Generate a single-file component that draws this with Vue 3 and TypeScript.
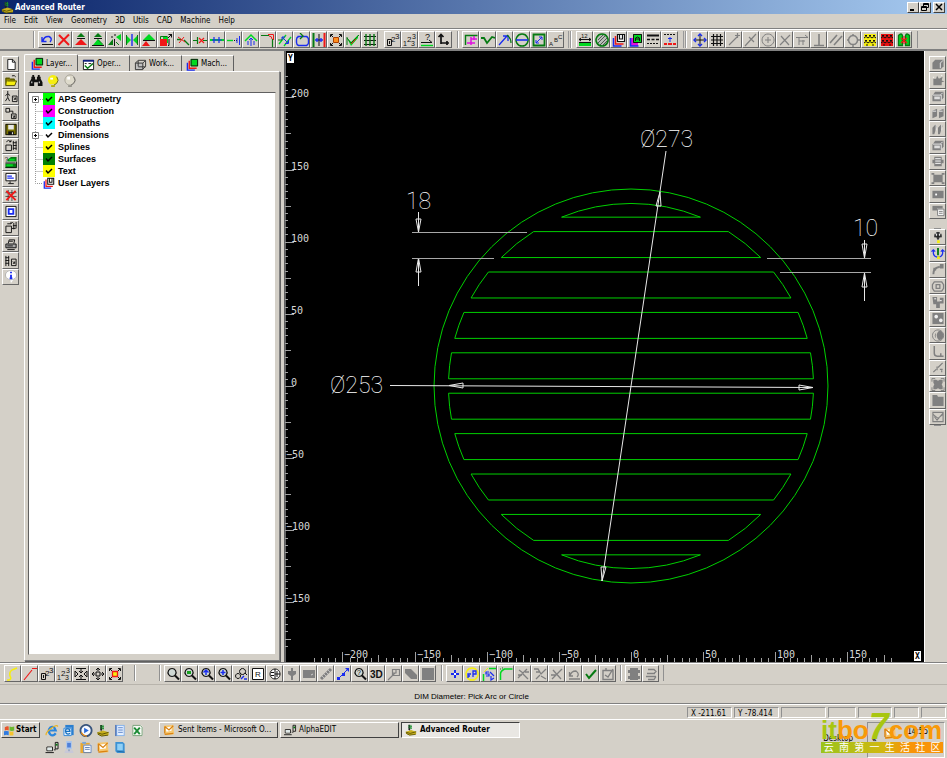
<script setup lang="ts">
import { h } from 'vue'

type Part = { k: 'f' | 's' | 't'; c: string; d: string; w?: number; x?: number; y?: number; z?: number }
const f = (c: string, d: string): Part => ({ k: 'f', c, d })
const s = (c: string, d: string, w = 1): Part => ({ k: 's', c, d, w })
const t = (c: string, x: number, y: number, z: number, d: string): Part => ({ k: 't', c, d, x, y, z })

const K = '#111'
const G = '#00d820'
const D = '#067a12'
const B = '#1a2cf0'
const R = '#f01818'
const Y = '#f6ee10'
const N = '#808080'
const W = '#fff'
const M = '#e010e0'

const numbers = [s(K, 'M1.5 6.5h4v6h-4zM3.5 8v3'), t(K, 5, 9, 8, '2'), t(K, 9, 6, 8, '3')]
const numbersDiag = [t(K, 0, 13, 7, '1'), t(K, 4, 9, 8, '2'), t(K, 9, 6, 7, '3'), t(K, 8, 13, 7, '3')]
const corners = s(K, 'M1.5 4V1.5H4M10 1.5h2.5V4M12.5 10v2.5H10M4 12.5H1.5V10M2 2l2 2M12 2l-2 2M2 12l2-2M12 12l-2-2')
const lens = [f('#cfd8d4', 'M6 1.5a4 4 0 1 0 .1 0z'), s(K, 'M6 1.5a4 4 0 1 0 .1 0z', 1.2), s(K, 'M9 8.5l4 4', 2)]
const layersU = [s(B, 'M1.5 5v8h8', 1.5), s(R, 'M3.5 3v8h8', 1.5), f(W, 'M5 1h8v8H5z'), s(K, 'M5.5 1.5h7v7h-7zM7.5 2v4h3V2', 1.2)]
const layersG = [s(B, 'M1.5 5v8h8', 1.5), s(R, 'M3.5 3v8h8', 1.5), f(G, 'M5 1h8v8H5z'), s(K, 'M5.5 1.5h7v7h-7z')]
const brick = (c: string) => [
  f(c, 'M1 1h12v12H1z'),
  s(K, 'M2 2.5h2M6 2.5h2M10 2.5h2M1 5l2-1.5 2 1.500 2-1.500 2 1.500 2-1.500 2 1.500M2 7.5h2M6 7.5h2M10 7.5h2M1 10l2-1.500 2 1.500 2-1.500 2 1.500 2-1.500 2 1.500M3 12h2M9 12h2'),
]
const boxG = [f(N, 'M1 5l3-3h9v7l-3 3H1z'), s('#e8e8e8', 'M9.5 11V5.5l3-3')]
const edit = [f('#c8b020', 'M1 9l6-2 6 2v3l-8 1-4-2z'), s('#5a5200', 'M1 9.5l5 1.5 7-2M1.5 11l4 2 7-1'), f('#222', 'M4 1h2v5l-1 2-1-2z'), s('#18902c', 'M7 1v5M4 2l4 1M4 4l4 1')]
const pcs = [s(K, 'M1.5 6.5h6v4h-6z'), s(K, 'M0 12.5h9M9 9.5h2M10.5 1.5h3v7h-3z'), f('#dfe8e8', 'M2 7h5v3H2z'), s(D, 'M12 3v2', 2)]
const mail = [f('#f6c66e', 'M1 2l11-1 1 11-10 1z'), f(W, 'M3 4l7-1v5l-6 1z'), s('#d98210', 'M2 3l5 4 5-5M2 12l10-1M2 3v8', 1.4)]

const icons: Record<string, Part[]> = {
  undo: [s(B, 'M2 4v4.5h4.500M3 8q1-5 6-4.5 4 2 1 5.500', 1.4), s(K, 'M2 11.5h11')],
  delete: [s(R, 'M2 2l10 10M12 1.5L1.5 12', 2)],
  raise: [f(D, 'M7 0l4 4H3z'), s(K, 'M3 5.5h8'), f(R, 'M7 6l6 6H1z')],
  lift: [f(D, 'M7 0l4 4H3z'), s(K, 'M3 5.5h8M1 12.5h12'), f(G, 'M7 6l5 6H2z'), s(D, 'M7 6.5l5 5')],
  rotate: [f(D, 'M0 12l5-6v6z'), f(G, 'M8 4l5-3v7z'), s(K, 'M3 4h2M6 2h2M6.5 6v7'), s(D, 'M8 9l3 3')],
  mirror: [f(G, 'M1 2l5 5-5 5z'), f(G, 'M13 2L8 7l5 5z'), s(B, 'M7 1v12', 1.4), s(D, 'M1.5 2v10M12.5 2v10')],
  slope: [f(G, 'M7 1l6 6H1z'), s(K, 'M1 7.5h12'), f(R, 'M4 8l4 5H0z')],
  scale: [s(D, 'M1.5 6V3.5h7'), f(G, 'M4 4h5v6H4z'), f(R, 'M1 6h7v7H1z'), s(K, 'M9 5l4-4M9.5 1.5h3v3M9 12.5h1V6')],
  trimA: [s(D, 'M1 6.5h4M8 7l5 5', 1.4), s(R, 'M2 4l7 5M8 4l-5 6')],
  trimB: [s(D, 'M0 7.5h4M4.5 4v7M10 7.5h4', 1.2), s(R, 'M6 5l5 5M11 5l-5 5', 1.2)],
  join: [s(G, 'M0 7h14', 2), s(B, 'M4 4v6M9 4v6M2 7h10', 1.2)],
  extend: [s(G, 'M0 7.5h6', 1.4), s(K, 'M7 7.5h1M9 7.5h1'), s(B, 'M12.5 3v9M10 5v5')],
  peak: [s(G, 'M1 8l6-6 6 6', 1.5), s(B, 'M4 8v4M7 5v8M10 8v4M5 7l2-2 2 2')],
  fillet: [s(D, 'M0 2.5h8M11.5 6v8', 1.2), s(R, 'M7 1.5h5.5V7M8 3q3 0 3 3')],
  offset: [s(G, 'M1 11L8 2M6 13l7-9', 1.3), s(B, 'M4 4l6 6M4 7V4h3M7 10.5h3.5V7'), s(D, 'M0 7h4')],
  contour: [s(B, 'M2.5 3.5h9q2 1 2 3v3q0 2-2 3h-8q-2-1-2-3v-3q0-2 2-3', 1.4), s(D, 'M5 6l3-3-3-3', 1.3)],
  gap: [s(D, 'M1.5 0v14', 2), s(R, 'M12.5 0v14', 2), s(B, 'M3 7h8M5 5v4M9 5v4', 1.3), s(K, 'M7 1v12')],
  explode: [corners, f('#ff9020', 'M5 5h4v4H5z'), s('#b04000', 'M4.5 4.5h5v5h-5z')],
  check: [f(G, 'M1 5l4 4 7-7v3l-7 8z'), s(R, 'M5 11l5-5'), s(D, 'M1 4v8M1 5l4 5 8-8')],
  grid3: [s(K, 'M1 3.5h12M1 7.5h12M1 11.5h12'), s(D, 'M3 1v12M7 1v12M11 1v12', 1.4)],
  num: numbers,
  numDiag: numbersDiag,
  query: [t(K, 5, 7, 9, '?'), s(G, 'M1 12.5h12', 1.4), s(K, 'M1 9.5h11M9 7l3 2.5')],
  axes: [s(K, 'M4 2v9M1.5 4L4 1.5 6.500 4M4 10h8M10 8v4', 1.7)],
  rectPath: [s(D, 'M1.5 12V2.5h12', 1.4), s(M, 'M3 10h8M7 6h6M7 4v8M10 3v4', 1.5)],
  wave: [s(D, 'M0 5l3 0 3 5 5-6 3 1', 1.8)],
  arc: [s(B, 'M1 12l8-9M5 3h5v5', 1.3), s(D, 'M9 2q4 3 4 8', 1.2)],
  circle: [s(D, 'M7 1a6 6 0 1 0 .1 0z', 1.5), s(B, 'M1 7h12', 1.6)],
  square: [s(D, 'M1.5 1.5h11v11h-11z', 1.8), s(B, 'M4 10l6-6M4 7v3h3M7 4h3v3')],
  abc: [t(K, 0, 13, 6, 'A'), t(K, 5, 9, 6, 'B'), t(K, 9, 6, 6, 'C')],
  measure: [f(G, 'M1 9h12v4H1z'), s(K, 'M1 6.5h12M3 5L1 6.500 3 8M11 5l2 1.500L11 8M1 9.5h12'), t(K, 3, 5, 6, '12')],
  hatch: [f('#b8c0b8', 'M7 1a6 6 0 1 0 .1 0z'), s('#555', 'M3 7l5-5M3 10l7-7M5 12l7-7M8 12l4-4'), s(D, 'M7 1a6 6 0 1 0 .1 0z', 1.6)],
  layersU,
  lock: [f(M, 'M1 5h8v8H1z'), s(B, 'M1.5 5v8h8', 1.6), f(G, 'M4 1h9v9H4z'), s(K, 'M4.5 1.5h8v8h-8zM6.500 8V5q2-2 4 0v3M7 6h3')],
  lines: [s(K, 'M1 2.5h12', 2), s(K, 'M1 6.5h3M5.5 6.5h3M10 6.5h3', 1.6), s(K, 'M1 10.5h2M4 10.5h2M7 10.5h2M10 10.5h2')],
  linesRed: [s(K, 'M1 1.5h2M4 1.5h2M7 1.5h2M10 1.5h2'), s(B, 'M7 4v5M5 5.5h4'), s(R, 'M1 11h3M5 11h4M10 11h3', 2)],
  move: [s(K, 'M7 1v12M1 7h12'), s(B, 'M5 3l2-2 2 2M5 11l2 2 2-2M3 5L1 7l2 2M11 5l2 2-2 2', 1.4)],
  mesh: [s(K, 'M1 3.5h12M1 7h12M1 10.5h12M3.5 1v12M7 1v12M10.5 1v12', 1.2)],
  gEnd: [s(N, 'M2 12L11 3M8 2.5h5M10.5 0v5', 1.2)],
  gMid: [s(N, 'M1 13L12 1M5 4l5 5', 1.2)],
  gCentre: [s(N, 'M7 1a6 6 0 1 0 .1 0zM7 4v6M4 7h6')],
  gCross: [s(N, 'M2 12L12 2M3 3l8 9', 1.2)],
  gTan: [s(N, 'M1 4.5h12M10 2l3 2.5M4 5v7M8 7v5M4 8h6')],
  gPerp: [s(N, 'M7 1v11M2 12.5h10', 1.6)],
  gPar: [s(N, 'M1 10l7-8M5 12l8-9', 1.6)],
  gRing: [s(N, 'M7 2.5a4.5 4.5 0 1 0 .1 0zM7 1v2M7 11v3M1 7h2M11 7h3', 1.5)],
  brickY: brick(Y),
  brickR: brick('#e81010'),
  book: [f(G, 'M1 2l4-1v11H1zM13 2L9 1v11h4z'), s(D, 'M1.5 2.5q3-3 4 0v10h-4zM12.5 2.5q-3-3-4 0v10h4z', 1.3), s(R, 'M4 5l6 5M10 5l-6 5M7 3v8', 1.2)],
  page: [f(W, 'M3 1h6l3 3v9H3z'), s(K, 'M3.5 1.5H9l2.500 3v8h-8zM8.5 1.5v3h3')],
  open: [f('#8c8400', 'M1 4h4l1 1h5v7H1z'), f(Y, 'M3 7h10l-2 5H1z'), s('#4a4600', 'M1.5 12V4.5h4l1 1h4V7M3 7.5h10l-2 5H1'), s(K, 'M8 2q3-1 4 1')],
  person: [s(K, 'M3.5 1v3M1 6l2.5-2L6 6M3.5 4v4L1 12M3.5 8l2 4M8.500 6.5h5v6h-5zM10 8l2 2M12 8v2h-2')],
  nodes: [s(K, 'M1.5 1.5h4v4h-4zM7.5 7.5h5v5h-5zM6 4.5h3V7M9 9l2 2M11 9v2H9')],
  save: [f('#787000', 'M1 1h12v12H1z'), s(K, 'M1.5 1.5h11v11h-11z'), f('#e8e8e8', 'M4 2h6v5H4z'), f(K, 'M4 9h6v4H4z'), f(W, 'M8 10h1v2H8z')],
  boxIn: [s(K, 'M1.5 6.5h6v6h-6zM2 3q2-3 5 0M7 1v2H5M9.5 2v10M12.5 2v10M9 4h4M9 7h4M9 10h4')],
  greenStack: [t(K, 0, 6, 7, '?'), f(D, 'M3 4l4-3h6v5H3zM1 8h12v5H1z'), f(G, 'M5 3h6v2H5zM2 9h7v2H2z'), s(K, 'M1 7.5h11M1 12.5h12V6')],
  screen: [f(W, 'M2 2h10v7H2z'), s(K, 'M1.5 1.5h11v8h-11zM4 12.5h6M6 10v2'), s(B, 'M3 4.5h5M3 6.5h7', 1.3)],
  fault: [s(K, 'M1 4h12M1 8h12M4 1v12M8 1v12', 0.7), s(R, 'M2 2l10 10M12 2L2 12', 2)],
  chip: [f(W, 'M2 2h10v10H2z'), s(K, 'M1.5 1.5h11v11h-11z'), s(B, 'M4.5 4.5h5v5h-5z', 2)],
  boxOut: [s(K, 'M1.5 5.5h6v7h-6zM3 3h4V1M7 3l2-2M10 2v7M12.5 1v7M9 5h4M8 8h4')],
  printer: [f('#aaa', 'M1 6h12v5H1z'), s(K, 'M1.5 6.5h11v4h-11zM4 6l1-4h6l-1 4M3 12.5h8M5 3.5h4M3 8.5h6')],
  report: [s(K, 'M1.5 2v11M4.5 2v11M1 4h4M1 7h4M1 10h4M7.5 5.5h5v7h-5zM9 8l2 2M11 8v2H9')],
  info: [f(W, 'M7 0a6 5.5 0 1 0 .1 0zM6 10l1 4 3-4z'), s('#777', 'M7 .5a6 5 0 1 0 .1 0z', 0.5), s(B, 'M7 2v1.5M7 5v4M5.5 9h3', 2)],
  solid: boxG,
  star: [f(N, 'M2 5l3 0 1-3 2 3 4-2-1 4 3 1-3 1v3H2z'), s(W, 'M11 1v1M2 3v1')],
  boxO: [f(N, 'M1 6l3-4h9v6l-3 4H1z'), f('#ddd', 'M3 7h6v3H3z'), s('#eee', 'M1.5 5.5h9v6M10 5l2-2')],
  pair: [f(N, 'M1 4l5-2v8l-5 2zM8 4l5-2v8l-5 2z'), s('#eee', 'M1 4.5h4M8 4.5h4')],
  blades: [f(N, 'M1 5l3-3 2 1-3 9H1zM7 5l3-3 2 1-3 9H7z'), s('#eee', 'M5 2v6M11 2v6')],
  spool: [f(N, 'M3 2h8v3h2v4h-2v3H3V9H1V5h2z'), s(W, 'M4 4h6M4 6.5h6M4 9h6')],
  plate: [f(N, 'M2 3h10v8H2zM0 1h3v2H0zM11 1h3v2h-3zM0 11h3v2H0zM11 11h3v2h-3z')],
  dotPlate: [f(N, 'M1 3h12v8H1z'), f(W, 'M4 6h2v2H4z')],
  sheets: [f(N, 'M1 2h11v5H1z'), f('#f4f4f4', 'M6 5h7v8H6z'), s(N, 'M6.5 5.5h7v7h-7zM8 8h4M8 10h4')],
  drill: [f('#555', 'M5 1h4v2h2v4H9l-2 3-2-3H3V3h2z'), s(K, 'M3 5.5h8M7 1v8'), f(W, 'M5 3h1v2H5zM8 3h1v2H8z'), f(Y, 'M6 10h3v3H6z')],
  probe: [s(D, 'M7 1v8', 2), s(B, 'M2 3v4q1 4 5 4t5-4V3M0 5l2-2 2 2M10 5l2-2 2 2', 1.3), f(Y, 'M6 10h3v3H6z')],
  arm: [s(N, 'M2 12q0-7 7-8', 2), f(N, 'M9 1h4v5H9zM2 5h3v3H2z')],
  rings: [s(N, 'M3 2h8l2 3v4l-2 3H3L1 9V5zM5 5h4v4H5z', 1.4)],
  clamp: [f(N, 'M1 1h5v5h3V2h4v6H9v5H5V9H2z'), s(W, 'M3 3h2M9 5h2')],
  blobs: [f(N, 'M1 1h12v12H1z'), f('#eee', 'M5 3a2 2 0 1 0 .1 0zM10 7a2 2 0 1 0 .1 0z')],
  half: [s(N, 'M7 1a6 6 0 1 0 .1 0z'), f(N, 'M8 2q-5 5 0 10a5 5 0 0 0 0-10z'), f(N, 'M5 4q-3 3 0 6-1-3 0-6z')],
  sweep: [s(N, 'M3 1v8q0 3 3 3h7M10 9v3', 1.6)],
  spray: [s(N, 'M2 12l3-3M7 7l5-5M6 6v4M11 10v2M9 9h3', 1.3)],
  expand: [f(N, 'M2 2h3l2 1 2-1h3v3l-1 2 1 2v3H9l-2-1-2 1H2V9l1-2-1-2z'), s(N, 'M.5 4V.5H4M10 .5h3.5V4M13.5 10v3.5H10M4 13.5H.5V10')],
  folder: [f(N, 'M1 1h5l1 2h6v10H1z')],
  env: [s(N, 'M1.5 2.5h11v10h-11zM2 5l5 4 5-4M3 7l3 4 6-7', 1.2)],
  curve: [s(Y, 'M1 13h2q3-1 1-4-1-4 2-6l5-2', 1.5)],
  line: [s(R, 'M1 13L9 3', 1.2), s(R, 'M9 1.5h5')],
  dims: [s(K, 'M2 1.5h10M2 12.5h10M7 2v3M5 4l2 2 2-2M7 12V9M5 10l2-2 2 2M1 4v6l3-3zM13 4v6l-3-3z')],
  pan: [s(K, 'M7 1v3M7 10v3M1 7h3M10 7h3M5 3l2-2 2 2M5 11l2 2 2-2M3 5L1 7l2 2M11 5l2 2-2 2M5 5h4v4H5z')],
  fit: [corners, f(Y, 'M5 5h4v4H5z'), s(R, 'M4.5 4.5h5v5h-5z', 1.3)],
  zoom: lens,
  zoomG: [...lens, f('#18a020', 'M4 4h4v3H4z')],
  zoomUp: [...lens, s(B, 'M6 3v5M3.5 5.5L6 3l2.500 2.500', 1.5)],
  zoomDn: [...lens, s(B, 'M6 3v5M3.5 5.5h5', 1.5)],
  find: [s(K, 'M8.5 1.5a3 3 0 1 0 .1 0zM4 6.5a2.5 2.5 0 1 0 .1 0zM11 6l2 2'), s(B, 'M7 12l3-3M10 12h3', 1.4)],
  r: [f(W, 'M1 2h12v10H1z'), s(K, 'M1.5 1.5h11v11h-11z'), t(K, 4, 10, 8, 'R')],
  globe: [f(W, 'M7 2a5 5 0 1 0 .1 0z'), s(K, 'M7 2a5 5 0 1 0 .1 0zM7 2v10M3 5.5h3M3 8.5h3M7 7h5M9 4v6')],
  tool: [f(N, 'M6 1h2v3h3v3L8 9v4H6V9L3 7V4h3z')],
  plateG: [f(N, 'M1 3h12v8H1z'), s('#ccc', 'M9 8l2-1')],
  screw: [s(N, 'M2 12L12 2', 3), s('#ddd', 'M3 9l2 2M5 7l2 2M7 5l2 2M9 3l2 2', 0.7)],
  dots: [s(B, 'M1 13L13 1'), f(B, 'M1 10h3v3H1zM6 6h3v3H6zM9 1h4v4z')],
  zoomQ: [...lens, t(K, 4, 8, 7, '?')],
  threeD: [t(K, 0, 11, 10, '3D')],
  diagG: [s(N, 'M1 13l7-7M5.5 2.5h7v6h-7zM9 2v4H6', 1.2)],
  slab: [f(N, 'M1 2h6l6 6v4H7L1 6z')],
  block: [f(N, 'M1 1h12v12H1z')],
  point: [s(B, 'M7 3v8M3 7h8', 2), f(W, 'M6 6h2v2H6z')],
  ref: [s(Y, 'M7 1a6 6 0 1 0 .1 0z', 1.5), s(B, 'M3 11V7h3M3 9h2M8 10V4h3v3H8', 1.3)],
  snap: [s(G, 'M7 1.5h7M1.5 7v7', 1.5), s(Y, 'M2 5l4-4'), s(B, 'M7 5H4v2h3v2H4M9 9v4l3-2M8 5l4 4', 1.2)],
  path: [s(G, 'M1.5 13V7q0-3 4-5h8', 1.5), s(D, 'M1 2h1M3 1h1', 1.2)],
  cutA: [s(N, 'M2 11L11 2M3 3l4 3M7 7l5 5M9 5h4M2 8h4', 1.3)],
  cutB: [s(N, 'M1 2h4l3 5 5-5M3 12l4-4M8 9l5 3M3 5h4', 1.3)],
  cutC: [s(N, 'M2 12L12 2M3 3l8 9M1 8h5', 1.3)],
  undoG: [s(N, 'M2.5 5v4H6M3 9q1-5 6-5 4 3 1 6M2 12h11', 1.3)],
  ok: [s(D, 'M2 7l3 4 7-8', 2)],
  okG: [s(N, 'M2 3.5h10v9H2zM4 8l3 2 5-8M5 1v3', 1.4)],
  stackA: [f(N, 'M3 1h8v12H3zM1 3h12v3H1zM1 9h12v3H1z')],
  stackB: [s(N, 'M4 2.5h6l2 2-2 2H4M3 6.5h8M2 9.5h10M4 12.5h6l2-3', 1.3)],
  layersG,
  oper: [f(W, 'M1 2h12v10H1z'), s(K, 'M1.5 2.5h11v10h-11z'), f('#102080', 'M1 2h12v2H1z'), s(D, 'M3 8l3 3 6-5', 1.5), s(K, 'M3 6h2M7 6h3')],
  work: [f('#c0c0c0', 'M2 5h8v7H2z'), s('#333', 'M1.5 5.5h8v7h-8zM1.5 5.5l3-3h8l-3 3M12.5 3v6l-3 3M4.5 3v6M4.5 9.5h8')],
  binoc: [f(K, 'M2 3h4v3h2V3h4v2l2 4v4H9V9H5v4H0V9l2-4zM3 1h2v2H3zM9 1h2v2H9z'), f(W, 'M2 8h1v2H2zM10 8h1v2h-1z')],
  bulbOn: [f(Y, 'M7 1a5.5 5.5 0 1 0 .1 0zM5 11h4v3H5z'), s('#6a6a20', 'M11 3q3 4 0 7l-3 2M5 13h4'), f(W, 'M4 4h3v2H4z')],
  bulbOff: [f('#dedacb', 'M7 1a5.5 5.5 0 1 0 .1 0zM5 11h4v3H5z'), s('#555', 'M11 3q3 4 0 7l-3 2M5 13h4'), s('#99948a', 'M7 1a5.5 5.5 0 1 0 .1 0z', 0.8), f(W, 'M4 3h3v3H4z')],
  ie: [s('#2b86dd', 'M11 10q-3 4-6 1-3-4 0-7 4-3 6 3H4', 2.4), s('#e9b423', 'M1 12q-2-2 6-8 6-4 6-1', 1.3)],
  outlookE: [f('#2a7fd0', 'M3 1h9v11H3z'), f('#e9f5ff', 'M1 4h9v9H1z'), s('#1670c0', 'M8 10q-2 2-4 0-2-4 1-5 3 0 3 3H3', 1.4), s('#2a7fd0', 'M1.5 4.5h8v8h-8z')],
  media: [f('#38547c', 'M7 0a7 7 0 1 0 .1 0z'), f('#f5f8ff', 'M7 2a5 5 0 1 0 .1 0z'), f('#2668da', 'M5 4l5 3-5 3z'), s('#f0901a', 'M2 9q2 4 6 4', 1.3)],
  edit,
  notes: [f('#82b0ea', 'M2 1h10v12H2z'), f('#e4efff', 'M4 2h7v10H4z'), s('#5a82c8', 'M5 4h5M5 6.5h5M5 9h5'), s('#3d5ca0', 'M2.5 1v12')],
  excel: [f('#f6faf4', 'M2 1h9l2 2v10H2z'), s('#729c74', 'M2.5 1.5h8l2 2v9h-10z'), s('#1b8a34', 'M4 4l6 7M10 4l-6 7', 2)],
  pcs,
  phone: [f('#a9c6ee', 'M4 0h6v9H4z'), f('#4f80d8', 'M5 2h4v5H5z'), f('#c8c8d8', 'M3 10h8l1 3H2z'), s('#6688bb', 'M7 9v2')],
  files: [f('#e8a832', 'M1 2h10v11H1z'), f('#f9fbff', 'M4 4h9v8H4z'), s('#6080b0', 'M4.5 4.5h8v8h-8zM6 7h5M6 9h5'), f('#76a7e0', 'M3 1h4v2H3z')],
  mail,
  book2: [f('#3c92d4', 'M2 1h8l2 2v10H4l-2-2z'), f('#8fd0f6', 'M4 3h6v7H4z'), s('#1d66a0', 'M4 11l8 1')],
  flag: [f('#e8552a', 'M1 3q3-2 5-1v5q-2-1-5 0z'), f('#6bb82e', 'M7 2q3 1 6 0v5q-3 1-6 0z'), f('#2f7be0', 'M0 8q3-1 6 0v5q-3-1-6 0z'), f('#f6c32c', 'M7 8q3 1 5 0v5q-2 1-5 0z')],
}

const Ico = (props: { n: string }) =>
  h('svg', { class: 'ico', viewBox: '0 0 14 14', 'aria-hidden': 'true' }, icons[props.n].map(p =>
    p.k === 't'
      ? h('text', { x: p.x, y: p.y, 'font-size': p.z, fill: p.c }, p.d)
      : h('path', { d: p.d, fill: p.k === 'f' ? p.c : 'none', stroke: p.k === 's' ? p.c : 'none', 'stroke-width': p.w }),
  ))
Ico.props = ['n']

const topBars: string[][][] = [
  [
    ['undo', 'delete', 'raise', 'lift', 'rotate', 'mirror', 'slope', 'scale', 'trimA', 'trimB', 'join', 'extend', 'peak', 'fillet', 'offset', 'contour', 'gap', 'explode', 'check', 'grid3'],
    ['num', 'numDiag', 'query', 'axes'],
  ],
  [['rectPath', 'wave', 'arc', 'circle', 'square', 'abc']],
  [['measure', 'hatch', 'layersU', 'lock', 'lines', 'linesRed']],
  [['move', 'mesh', 'gEnd', 'gMid', 'gCentre', 'gCross', 'gTan', 'gPerp', 'gPar', 'gRing', 'brickY', 'brickR', 'book']],
]
const leftBar = ['page', 'open', 'person', 'nodes', 'save', 'boxIn', 'greenStack', 'screen', 'fault', 'chip', 'boxOut', 'printer', 'report', 'info']
const rightBars = [
  ['solid', 'star', 'boxO', 'pair', 'blades', 'boxO', 'spool', 'plate', 'dotPlate', 'sheets'],
  ['drill', 'probe', 'arm', 'rings', 'clamp', 'blobs', 'half', 'sweep', 'spray', 'expand', 'folder', 'env'],
]
const bottomBars = [
  ['curve', 'line', 'num', 'numDiag', 'dims', 'pan', 'fit'],
  [],
  ['zoom', 'zoomG', 'zoomUp', 'zoomDn', 'find', 'r', 'globe', 'tool', 'plateG', 'screw', 'dots', 'zoomQ', 'threeD', 'diagG', 'slab', 'block'],
  ['point', 'ref', 'snap', 'path', 'cutA', 'cutB', 'cutC', 'undoG', 'ok', 'okG'],
  ['stackA', 'stackB'],
]
const menus = ['File', 'Edit', 'View', 'Geometry', '3D', 'Utils', 'CAD', 'Machine', 'Help']
const tabs = [
  { icon: 'layersG', label: 'Layer...' },
  { icon: 'oper', label: 'Oper...' },
  { icon: 'work', label: 'Work...' },
  { icon: 'layersG', label: 'Mach...' },
]
const layers = [
  { name: 'APS Geometry', tone: 'lime', open: true },
  { name: 'Construction', tone: 'magenta' },
  { name: 'Toolpaths', tone: 'cyan' },
  { name: 'Dimensions', tone: 'white', open: true },
  { name: 'Splines', tone: 'yellow' },
  { name: 'Surfaces', tone: 'green' },
  { name: 'Text', tone: 'yellow' },
  { name: 'User Layers', tone: 'user' },
]
const branch = (i: number) => (i === 0 ? 'M6.5 12V6.5H14' : i === layers.length - 1 ? 'M6.5 0v6.5H14' : 'M6.5 0v12M6.5 6.5H14')
const quick = [['ie', 'outlookE', 'media', 'edit', 'notes', 'excel'], ['pcs', 'phone', 'files', 'mail', 'book2']]
const tasks = [
  { icon: 'mail', label: 'Sent Items - Microsoft O...', on: false },
  { icon: 'pcs', label: 'AlphaEDIT', on: false },
  { icon: 'edit', label: 'Advanced Router', on: true },
]
const brand = '云南第一生活社区'.split('')

/* Drawing space: origin at the grille centre, y down, U screen units per millimetre. */
const U = 1.443
const outer = 136.5 * U
const inner = 126.5
const half = (y: number) => Math.sqrt(inner * inner - y * y) * U
const slots: string[] = []
for (const sign of [-1, 1]) {
  const r = inner * U
  const sw = sign < 0 ? 0 : 1
  for (const y0 of [5, 33, 61, 89]) {
    const y1 = y0 + 18
    const a = half(y0)
    const b = half(y1)
    slots.push(`M${-a} ${sign * y0 * U}H${a}A${r} ${r} 0 0 ${sw} ${b} ${sign * y1 * U}H${-b}A${r} ${r} 0 0 ${sw} ${-a} ${sign * y0 * U}`)
  }
  const c = half(117)
  slots.push(`M${-c} ${sign * 117 * U}H${c}A${r} ${r} 0 0 ${sw} ${-c} ${sign * 117 * U}`)
}
const range = (a: number, b: number) => Array.from({ length: (b - a) / 5 + 1 }, (_, i) => a + i * 5)
const size = (v: number) => (v % 50 === 0 ? 9 : v % 25 === 0 ? 6 : 3)
const yTicks = range(-180, 215).map(v => `M-346 ${Math.round(-v * U) + 0.5}h${size(v)}`).join('')
const xTicks = range(-220, 180).map(v => `M${Math.round(v * U) + 0.5} 276v${-(size(v) + 1)}`).join('')
const marks = [-200, -150, -100, -50, 0, 50, 100, 150, 200]
const label = (m: number) => (m < 0 ? '−' + -m : String(m))
</script>

<template>
  <div class="app">
    <header class="title">
      <Ico n="edit" />
      <h1>Advanced Router</h1>
      <div class="winbtns">
        <button aria-label="Minimize"><svg viewBox="0 0 8 8"><path d="M1 7h4" stroke="#000" stroke-width="2" /></svg></button>
        <button aria-label="Restore"><svg viewBox="0 0 8 8"><path d="M2.500 3V.5h5v4H6M.5 3.500h5v4h-5zM2 1.500h5M1 4.500h4" fill="none" stroke="#000" /></svg></button>
        <button aria-label="Close" class="close"><svg viewBox="0 0 8 8"><path d="M1 1l6 6M7 1L1 7" stroke="#000" stroke-width="1.500" /></svg></button>
      </div>
    </header>

    <nav class="menu"><a v-for="m in menus" :key="m" href="#">{{ m }}</a></nav>

    <div class="bar top">
      <div v-for="(bar, bi) in topBars" :key="bi" class="band">
        <div v-for="(grp, gi) in bar" :key="gi" class="grp">
          <button v-for="n in grp" :key="n" class="tool" :aria-label="n"><Ico :n="n" /></button>
        </div>
      </div>
    </div>

    <main class="work">
      <div class="rail left">
        <div class="col files">
          <button v-for="n in leftBar" :key="n" class="tool" :aria-label="n"><Ico :n="n" /></button>
        </div>
      </div>

      <aside class="panel">
        <div class="tabs" role="tablist">
          <button v-for="(tab, ti) in tabs" :key="ti" role="tab" class="tab" :class="{ on: ti === 0 }"><Ico :n="tab.icon" />{{ tab.label }}</button>
        </div>
        <div class="sheet">
          <div class="tiny">
            <button v-for="n in ['binoc', 'bulbOn', 'bulbOff']" :key="n" :aria-label="n"><Ico :n="n" /></button>
          </div>
          <ul class="tree">
            <li v-for="(l, li) in layers" :key="l.name">
              <svg class="node" viewBox="0 0 14 12">
                <path :d="branch(li)" fill="none" stroke="#999" stroke-dasharray="1 1" />
                <path v-if="l.open" d="M3.500 3.500h6v6h-6z" fill="#fff" stroke="#808080" />
                <path v-if="l.open" d="M5 6.500h3M6.500 5v3" stroke="#000" />
              </svg>
              <span class="swatch" :class="l.tone">
                <Ico v-if="l.tone === 'user'" n="layersU" />
                <svg v-else viewBox="0 0 12 12"><path d="M3 5.500l2 2.500 4-4" fill="none" stroke="#000" stroke-width="1.500" /></svg>
              </span>
              <span class="name">{{ l.name }}</span>
            </li>
          </ul>
        </div>
      </aside>

      <section class="canvas">
        <svg viewBox="-346 -335 639 611" preserveAspectRatio="xMinYMin meet">
          <g fill="none" stroke="#00d000">
            <circle :r="outer" />
            <path v-for="(d, i) in slots" :key="i" :d="d" />
          </g>
          <g fill="none" stroke="#a0a0a0">
            <path d="M-345.500 -335V276" stroke="#666" />
            <path :d="yTicks" />
            <path :d="xTicks" />
          </g>
          <g class="scale">
            <template v-for="m in marks" :key="m">
              <text :x="m < 0 ? -345 : -340" :y="Math.round(-m * U)">{{ label(m) }}</text>
              <text v-if="m < 200" :x="Math.round(m * U) + 2" y="272">{{ label(m) }}</text>
            </template>
          </g>
          <path d="M-344 -333h7v10h-7zM283 265h7v10h-7z" fill="#fff" />
          <g class="axis"><text x="-343" y="-325">Y</text><text x="284" y="273">X</text></g>
          <g fill="none" stroke="#e8e8e8">
            <path d="M35 -235L-29 195M29 -194l-4 14h5zM-29 195l-1-14h5z" />
            <path d="M-241 -.5L182 1.500M-182 -.5l14-2.500v5zM182 1.500l-14-2.500v5z" />
            <path d="M-212.500 -174V-154M-212.500 -154l-2.500-13h5zM-212.500 -100V-128M-212.500 -128l-2.500 14h5z" />
            <path d="M233.500 -146V-128M233.500 -128l-2.500-14h5zM233.500 -85V-113M233.500 -113l-2.500 14h5z" />
            <path d="M-219 -153.500H-104M-219 -127.500H-137M136 -127.500H240M149 -113.500H240" stroke="#a8a8a8" />
          </g>
          <g class="dim">
            <text x="9" y="-239">Ø273</text>
            <text x="-301" y="7">Ø253</text>
            <text x="-225" y="-177">18</text>
            <text x="222" y="-150">10</text>
          </g>
        </svg>
      </section>

      <div class="rail right">
        <div v-for="(col, ci) in rightBars" :key="ci" class="col" :class="'c' + ci">
          <button v-for="(n, ni) in col" :key="ni" class="tool" :aria-label="n"><Ico :n="n" /></button>
        </div>
      </div>
    </main>

    <div class="bar bottom">
      <div v-for="(grp, gi) in bottomBars" :key="gi" class="band" :class="{ blank: !grp.length }">
        <div class="grp">
          <button v-for="n in grp" :key="n" class="tool" :aria-label="n"><Ico :n="n" :class="{ bold: n === 'threeD' }" /></button>
        </div>
      </div>
    </div>

    <p class="prompt">DIM Diameter: Pick Arc or Circle</p>

    <div class="status">
      <span class="w45">X -211.61</span><span class="w45">Y -78.414</span><span class="w45"></span><span class="w28"></span><span class="w34"></span><span class="w25"></span><span class="w25"></span>
    </div>

    <footer class="taskbar">
      <button class="start"><Ico n="flag" />Start</button>
      <div class="quick">
        <div v-for="(row, ri) in quick" :key="ri">
          <button v-for="n in row" :key="n" :aria-label="n"><Ico :n="n" /></button>
        </div>
      </div>
      <div class="tasks">
        <button v-for="k in tasks" :key="k.label" class="task" :class="{ on: k.on }"><Ico :n="k.icon" />{{ k.label }}</button>
      </div>
      <span class="desk">Desktop</span>
      <div class="tray">
        <span class="chev">«</span>
        <Ico n="mail" />
        <time>14:55</time>
      </div>
      <div class="mark">
        <div class="logo"><span class="g">it</span><span>bo</span><span class="seven">7</span><span>com</span></div>
        <div class="strip"><span v-for="c in brand" :key="c">{{ c }}</span></div>
      </div>
    </footer>
  </div>
</template>

<style>
body { background: #d4d0c8; }
</style>

<style scoped>
* { box-sizing: border-box; }
.app {
  min-height: 100vh;
  display: flex;
  flex-direction: column;
  background: #d4d0c8;
  font: 8px/12px "DejaVu Sans Condensed", "DejaVu Sans", sans-serif;
  color: #000;
}
button { font: inherit; color: inherit; padding: 0; margin: 0; border: 0; background: none; }
.ico { width: 14px; height: 14px; display: block; flex: none; }
.ico :deep(text) { font-family: "Liberation Sans", sans-serif; }
.ico.bold :deep(text) { font-weight: bold; }

.title { height: 14px; display: flex; align-items: center; background: linear-gradient(90deg, #0a246a, #a6caf0); padding-right: 2px; }
.title .ico { width: 15px; height: 13px; }
.title h1 { margin: 0; font-size: 8px; line-height: 13px; color: #fff; }
.winbtns { margin-left: auto; display: flex; }
.winbtns button { width: 12px; height: 11px; background: #d4d0c8; border: 1px solid; border-color: #fff #404040 #404040 #fff; display: grid; place-items: center; }
.winbtns svg { width: 8px; height: 8px; }
.winbtns .close { margin-left: 2px; }

.menu { height: 14px; display: flex; gap: 8px; padding-left: 4px; line-height: 14px; }
.menu a { color: #000; text-decoration: none; }

.bar { display: flex; border-top: 1px solid #808080; box-shadow: inset 0 1px #fff; }
.bar.top { height: 23px; border-bottom: 2px solid #808080; padding: 2px 0 1px 33px; }
.band { display: flex; gap: 6px; padding: 0 5px 0 4px; border-left: 1px solid #909090; box-shadow: inset 1px 0 #fff; }
.top .band:nth-child(2) { padding-right: 4px; }
.top .band:nth-child(n + 3) { border-left: 3px double #999; padding-left: 5px; }
.top .band:last-child { border-right: 1px solid #909090; }
.grp { display: flex; }
.tool {
  width: 17px; height: 17px; display: grid; place-items: center; background: #d4d0c8;
  border: 1px solid; border-color: #fff #666 #666 #fff; overflow: hidden;
}

.work { flex: 1; display: flex; min-height: 0; }
.rail { flex: none; }
.rail.left { width: 24px; padding: 5px 0 0 2px; }
.col { display: grid; grid-auto-rows: 1fr; width: 17px; }
.col .tool { height: auto; min-height: 0; }
.col .ico { height: 13px; }
.col.files { height: 229px; }
.rail.right { width: 23px; padding: 5px 0 0 4px; border-left: 1px solid #fff; }
.col.c0 { height: 163px; }
.col.c1 { height: 196px; margin-top: 10px; box-shadow: 0 -6px 0 -5px #909090, 0 6px 0 -5px #909090; }

.panel { flex: none; width: 257px; display: flex; flex-direction: column; padding: 3px 0 1px; }
.tabs { display: flex; height: 17px; }
.tab { display: flex; align-items: center; gap: 2px; width: 52px; margin-top: 1px; padding: 1px 0 0 4px; border-right: 1px solid #606060; border-top: 1px solid #fff; white-space: nowrap; }
.tab .ico { width: 13px; height: 13px; }
.tab.on { width: 54px; margin-top: 0; padding-left: 6px; border-left: 1px solid #fff; border-radius: 2px 2px 0 0; }
.sheet { flex: 1; display: flex; flex-direction: column; border: 1px solid; border-color: #fff #808080 #808080 #fff; box-shadow: 1px 1px #606060; padding: 2px 3px 5px 3px; margin-right: 1px; }
.tiny { display: flex; gap: 3px; height: 18px; align-items: flex-start; padding-left: 1px; }
.tiny .ico { width: 14px; height: 13px; }
.tree { flex: 1; margin: 0; padding: 0; list-style: none; background: #fff; border: 1px solid; border-color: #606060 #d4d0c8 #d4d0c8 #606060; }
.tree li { display: flex; height: 12px; align-items: center; font: bold 9px/12px "Liberation Sans", sans-serif; }
.node { width: 14px; height: 12px; }
.swatch { width: 12px; height: 12px; display: block; }
.swatch svg { width: 12px; height: 12px; display: block; }
.lime { background: #0f0; }
.magenta { background: #f0f; }
.cyan { background: #0ff; }
.yellow { background: #ff0; }
.green { background: #008000; }
.name { padding-left: 3px; }

.canvas { flex: 1; min-width: 0; background: #000; border-left: 1px solid #606060; margin-left: 3px; position: relative; }
.canvas svg { position: absolute; inset: 0; width: 100%; height: 100%; }
.scale { font: 10px "DejaVu Sans Mono", monospace; fill: #d8d8d8; }
.axis { font: bold 8px "DejaVu Sans Mono", monospace; fill: #000; }
.dim { font: 100 23px Roboto, sans-serif; fill: #fff; }

.bar.bottom { height: 23px; padding: 2px 0 3px; border-bottom: 1px solid #b8b4ac; }
.bottom .band:first-child { border-left: 0; padding: 0 11px 0 4px; box-shadow: none; }
.bottom .band.blank { width: 25px; }
.bottom .band:nth-child(4) { padding-right: 4px; }
.bottom .band:last-child { border-right: 1px solid #909090; padding-right: 4px; }
.prompt { margin: 0; padding-right: 4px; height: 19px; text-align: center; line-height: 23px; border-bottom: 1px solid #808080; font-family: "Liberation Sans", sans-serif; }
.status { height: 15px; display: flex; justify-content: flex-end; gap: 2px; padding: 2px 1px 1px; border-top: 1px solid #fff; }
.status span { border: 1px solid; border-color: #909090 #fff #fff #909090; padding-left: 3px; line-height: 11px; white-space: nowrap; }
.w45 { width: 45px; }
.w28 { width: 28px; }
.w34 { width: 34px; }
.w25 { width: 25px; }

.taskbar { height: 39px; display: flex; align-items: flex-start; border-top: 1px solid #fff; padding: 2px 2px 1px 1px; position: relative; }
.start { width: 39px; height: 16px; display: flex; align-items: center; gap: 1px; padding-left: 2px; font-weight: bold; border: 1px solid; border-color: #fff #404040 #404040 #fff; }
.start .ico { width: 11px; height: 11px; }
.quick { width: 119px; padding-left: 5px; }
.quick div { display: flex; gap: 3px; height: 17px; align-items: center; }
.quick .ico { width: 14px; height: 13px; }
.tasks { display: flex; gap: 2px; flex: 1; }
.task { width: 119px; height: 16px; display: flex; align-items: center; gap: 2px; padding-left: 2px; border: 1px solid; border-color: #fff #404040 #404040 #fff; white-space: nowrap; }
.task .ico { height: 12px; }
.task.on { font-weight: bold; border-color: #404040 #fff #fff #404040; background: #e9e7e3; }
.desk { padding: 11px 14px 0 0; }
.tray { width: 78px; height: 36px; border: 1px solid; border-color: #909090 #fff #fff #909090; display: flex; gap: 6px; padding: 3px 16px 0 4px; }
.tray time { margin-left: auto; }
.chev { padding-top: 8px; font-weight: bold; }
.mark { position: absolute; right: 4px; bottom: 5px; width: 122px; }
.logo { display: flex; align-items: flex-end; height: 30px; font: bold 26px/24px "Liberation Sans", sans-serif; color: #f89a08; }
.logo .g, .seven { color: #a8c610; }
.seven { font-size: 36px; line-height: 30px; font-style: italic; }
.strip { display: flex; justify-content: space-around; height: 11px; background: linear-gradient(90deg, #9ac41c, #d0b810 50%, #f89408 70%); color: #fff; font: 10px/10px "Noto Sans CJK SC", sans-serif; }
</style>
